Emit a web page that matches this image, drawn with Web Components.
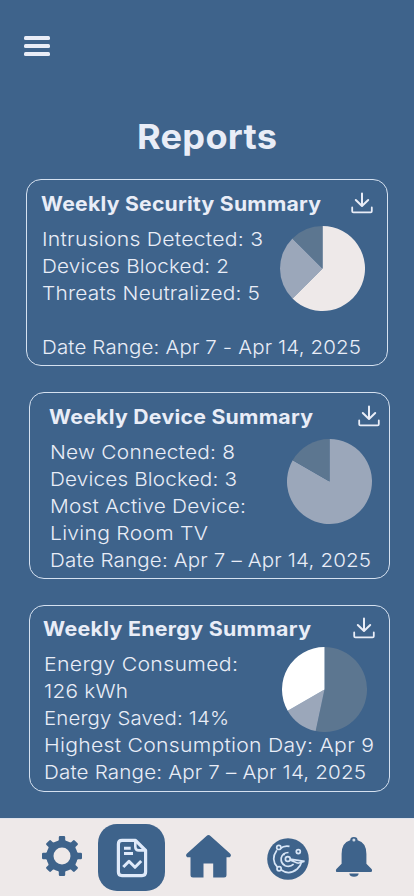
<!DOCTYPE html>
<html lang="en">
<head>
<meta charset="utf-8">
<title>Reports</title>
<style>
html,body{margin:0;height:100%;background:#3e638b}
body{font-family:Inter,"Open Sans",sans-serif;color:#e9edf7;overflow:hidden}
</style>
</head>
<body>
<reports-page></reports-page>
<script>
// One line of text, widened to span the given width: lightly tracked, the rest by stretching.
class TextLine extends HTMLElement{
  connectedCallback(){
    const root=this.attachShadow({mode:'open'});
    root.innerHTML=`<style>:host{display:block;white-space:nowrap;height:var(--line,27px);line-height:var(--line,27px)}span{display:inline-block;transform-origin:0 50%}</style><span></span>`;
    const s=root.querySelector('span');
    s.textContent=this.getAttribute('text');
    const w=parseFloat(this.getAttribute('width'));
    const n=s.textContent.length;
    if(!w||!n)return;
    const natural=s.getBoundingClientRect().width;
    const track=(w-natural)*0.2/n;
    s.style.letterSpacing=track.toFixed(3)+'px';
    s.style.transform=`scaleX(${(w/(natural+track*(n-1))).toFixed(4)})`;
  }
}
customElements.define('text-line',TextLine);

class PieChart extends HTMLElement{
  connectedCallback(){
    const root=this.attachShadow({mode:'open'});
    const pt=d=>{const a=d*Math.PI/180;return (42.5+42.5*Math.sin(a)).toFixed(2)+' '+(42.5-42.5*Math.cos(a)).toFixed(2)};
    let from=0;
    const paths=this.getAttribute('slices').split(',').map(p=>{
      const [deg,color]=p.split(':');const to=from+Number(deg);
      const d=`M42.5 42.5L${pt(from)}A42.5 42.5 0 ${to-from>180?1:0} 1 ${pt(to)}Z`;
      from=to;return `<path d="${d}" fill="${color}"/>`;
    }).join('');
    root.innerHTML=`<style>:host{display:block;width:85px;height:85px}svg{display:block}</style><svg width="85" height="85" viewBox="0 0 85 85">${paths}</svg>`;
  }
}
customElements.define('pie-chart',PieChart);

class DownloadIcon extends HTMLElement{
  connectedCallback(){
    this.attachShadow({mode:'open'}).innerHTML=`<style>:host{display:block;width:22px;height:22px;margin-top:1px}svg{display:block}</style>
    <svg width="22" height="22" viewBox="0 0 22 22" fill="none" stroke="#e9edf7" stroke-width="2" stroke-linecap="round" stroke-linejoin="round"><path d="M11 1.5V13.3M4.8 8L11 14L17.2 8"/><path d="M1.2 15.5V19.2Q1.2 20.4 2.4 20.4H19.6Q20.8 20.4 20.8 19.2V15.5" stroke-width="1.8"/></svg>`;
  }
}
customElements.define('download-icon',DownloadIcon);

class ReportCard extends HTMLElement{
  connectedCallback(){
    this.attachShadow({mode:'open'}).innerHTML=`<style>
    :host{display:block;box-sizing:border-box;border:1.2px solid #d5e1f0;border-radius:15px}
    header{display:flex;justify-content:space-between;height:var(--hh,35px);padding:var(--ht,11px) var(--dl,14px) 0 var(--tl,15px);box-sizing:content-box}
    .title{font-weight:700;font-size:19.4px;--line:27px}
    .body{display:grid;font-size:19.3px;font-weight:360;padding-left:var(--bl,16px)}
    .lines,.chart{grid-area:1/1}
    .chart{justify-self:end;margin:var(--py,0) var(--pr,22px) 0 0}
    </style>
    <header><text-line class="title" text="${this.getAttribute('heading')}" width="${this.getAttribute('heading-width')}"></text-line><download-icon></download-icon></header>
    <div class="body"><div class="lines"><slot></slot></div><div class="chart"><slot name="chart"></slot></div></div>`;
  }
}
customElements.define('report-card',ReportCard);

class NavBar extends HTMLElement{
  connectedCallback(){
    this.attachShadow({mode:'open'}).innerHTML=`<style>
    :host{display:grid;grid-template-columns:98px 67px 87px 72px 90px;height:78px;background:#eee9e9;border-top:1px solid #dfe3ec;box-sizing:border-box;color:#3e638b;align-items:start}
    svg{display:block}
    .gear{margin:16px 0 0 41px}.active{width:67px;height:67px;border-radius:19px;background:#3e638b;margin-top:5px;display:grid;place-items:center}
    .home{margin:15px 0 0 20px}.radar{margin:19px 0 0 15px}.bell{margin:17px 0 0 11px}
    </style>
    <svg class="gear" width="42" height="42" viewBox="0 0 42 42"><g fill="currentColor"><circle cx="21" cy="21" r="15.7"/>
    <g><path id="tooth" d="M15.5 8L17.8 5.2V2.2Q17.8 1 19 1H23Q24.2 1 24.2 2.2V5.2L26.5 8ZM15.5 34L17.8 36.8V39.8Q17.8 41 19 41H23Q24.2 41 24.2 39.8V36.8L26.5 34Z"/><use href="#tooth" transform="rotate(45 21 21)"/><use href="#tooth" transform="rotate(90 21 21)"/><use href="#tooth" transform="rotate(135 21 21)"/></g></g><circle cx="21" cy="21" r="8.5" fill="#eee9e9"/></svg>
    <div class="active"><svg width="32" height="40" viewBox="0 0 32 40" fill="none" stroke="#dfeafa" stroke-width="3.2" stroke-linejoin="round"><path d="M19.5 2.4H6Q2.4 2.4 2.4 6V34Q2.4 37.6 6 37.6H26Q29.6 37.6 29.6 34V12.5Z"/><path d="M19.3 2.8V9Q19.3 12.4 22.8 12.4H29.3" stroke-width="2.6"/><path d="M8 10.3H14.7M8 15.5H17" stroke-width="3"/><path d="M7.3 29L13 23.3L19 29.3L25.2 23" stroke-width="3"/></svg></div>
    <svg class="home" width="47" height="46" viewBox="0 0 47 46"><path d="M21.5 2Q23.5 .2 25.5 2L45 19.6Q47 21.5 44.8 23.3H41.5V41Q41.5 43.5 39 43.5H28.2V29.5H18.5V43.5H8Q5.5 43.5 5.5 41V23.3H2.2Q0 21.5 2 19.6Z" fill="currentColor"/></svg>
    <svg class="radar" width="42" height="42" viewBox="0 0 42 42"><circle cx="21" cy="21" r="20.8" fill="currentColor"/><g fill="none" stroke="#d7e5f6" stroke-width="1.7"><path d="M22.5 8.3Q17 7.2 13.3 10.5M9.8 12.2Q3.3 21.5 10.4 29.2M14 31.8Q22 37.6 30.2 31Q33.7 28 34.5 24"/><path d="M21.5 14.5Q15.5 14.5 14.2 20Q13.5 25 18.2 27.7Q23 29.5 26.6 26.2"/><circle cx="20.8" cy="21" r="2.4"/><circle cx="11.8" cy="9.4" r="2.1"/><circle cx="12.1" cy="30.7" r="2.1"/><circle cx="31.3" cy="13.6" r="2"/><path d="M23 21.1L37.7 23.4M23 22L31 25.2M31 25.2L37 23.5M17.5 17.2L16.4 16"/></g></svg>
    <svg class="bell" width="38" height="42" viewBox="0 0 38 42"><path d="M6.6 18Q6.6 6.5 15.2 4.2Q15.3 1 18.9 1Q22.5 1 22.6 4.2Q31.4 6.5 31.4 18V27.8L36.8 33.2Q37.6 36 35.5 36H2.3Q.2 36 1.2 33.2L6.6 27.8Z" fill="currentColor"/><circle cx="18.9" cy="4" r="1.5" fill="#cfd8e3"/><path d="M14.3 37.4H23.7Q23.2 40.7 19 40.7Q14.8 40.7 14.3 37.4Z" fill="currentColor"/></svg>`;
  }
}
customElements.define('nav-bar',NavBar);

class ReportsPage extends HTMLElement{
  connectedCallback(){
    this.attachShadow({mode:'open'}).innerHTML=`<style>
    :host{display:flex;flex-direction:column;height:896px;width:414px;background:#3e638b}
    .menu{display:flex;flex-direction:column;gap:4px;margin:36px 0 0 24px;width:26px;height:20px}
    .menu i{height:4px;border-radius:1.5px;background:#e9edf7}
    h1{margin:59px 0 0 137px;font-size:34.2px;font-weight:700;height:43px;--line:43px}
    main{display:flex;flex-direction:column;gap:26px;margin-top:21px;flex:1}
    report-card{height:187px;width:361px;margin-left:29px}
    .a{margin-left:26px;width:362px;--tl:14px;--bl:15px}
    .b{--tl:19px;--bl:20px;--dl:9px;--pr:17px}
    .c{--tl:13px;--bl:14px;--dl:14px;--pr:22px;--ht:10px;--hh:35px;--py:-4px}
    </style>
    <div class="menu"><i></i><i></i><i></i></div>
    <h1><text-line text="Reports" width="140"></text-line></h1>
    <main>
    <report-card class="a" heading="Weekly Security Summary" heading-width="280">
      <text-line text="Intrusions Detected: 3" width="221"></text-line><text-line text="Devices Blocked: 2" width="187"></text-line><text-line text="Threats Neutralized: 5" width="218"></text-line><text-line text=""></text-line><text-line text="Date Range: Apr 7 - Apr 14, 2025" width="319"></text-line>
      <pie-chart slot="chart" slices="225:#eee9e9,90:#9ba7ba,45:#5c7690"></pie-chart></report-card>
    <report-card class="b" heading="Weekly Device Summary" heading-width="264">
      <text-line text="New Connected: 8" width="185"></text-line><text-line text="Devices Blocked: 3" width="187"></text-line><text-line text="Most Active Device:" width="196"></text-line><text-line text="Living Room TV" width="158"></text-line><text-line text="Date Range: Apr 7 – Apr 14, 2025" width="321"></text-line>
      <pie-chart slot="chart" slices="300:#9ba7ba,60:#5c7690"></pie-chart></report-card>
    <report-card class="c" heading="Weekly Energy Summary" heading-width="268">
      <text-line text="Energy Consumed:" width="194"></text-line><text-line text="126 kWh" width="84"></text-line><text-line text="Energy Saved: 14%" width="185"></text-line><text-line text="Highest Consumption Day: Apr 9" width="330"></text-line><text-line text="Date Range: Apr 7 – Apr 14, 2025" width="322"></text-line>
      <pie-chart slot="chart" slices="192:#5c7690,48:#9ba7ba,120:#ffffff"></pie-chart></report-card>
    </main>
    <nav-bar></nav-bar>`;
  }
}
customElements.define('reports-page',ReportsPage);
</script>
</body>
</html>
